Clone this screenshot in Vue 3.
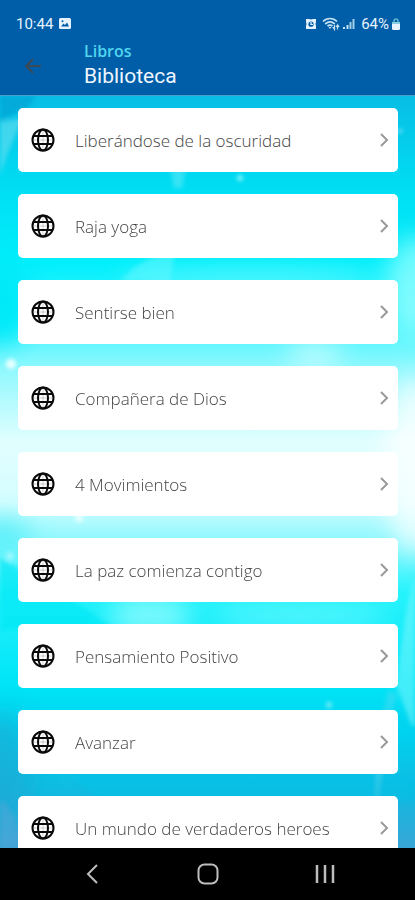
<script setup>
const books = [
  'Liberándose de la oscuridad',
  'Raja yoga',
  'Sentirse bien',
  'Compañera de Dios',
  '4 Movimientos',
  'La paz comienza contigo',
  'Pensamiento Positivo',
  'Avanzar',
  'Un mundo de verdaderos heroes',
]
</script>

<template>
  <div class="screen">
    <header class="top">
      <div class="status">
        <div class="status-group">
          <span>10:44</span>
          <svg width="12" height="12" viewBox="0 0 12 12" aria-hidden="true">
            <rect width="12" height="11" rx="1.500" fill="#e6f3ff" />
            <path d="M2 8.5 4.5 5.5 6 7 8 4.5 10 8.5Z" fill="#005da8" />
            <circle cx="3.5" cy="3.2" r="1" fill="#005da8" />
          </svg>
        </div>
        <div class="status-group right">
          <svg width="12" height="12" viewBox="0 0 12 12" aria-hidden="true">
            <path d="M1 1h3l2 .5L8 1h3v3l-.5 2 .5 2v3H1V8l.5-2L1 4Z" fill="#e6f3ff" />
            <circle cx="6" cy="6.2" r="2.6" fill="#005da8" />
            <path d="M6 4v2.500h2" fill="none" stroke="#e6f3ff" stroke-width="1.200" />
          </svg>
          <svg class="wifi" width="18" height="14" viewBox="0 0 18 14" fill="none" stroke="#c5e3f5" aria-hidden="true">
            <path d="M1 4.5C5 .5 11 .5 15 4.5M3.2 7c3-2.6 6.600-2.600 9.600 0M5.500 9.200c1.600-1.300 3.400-1.300 5 0" stroke-width="1.700" />
            <path d="M6.500 10h3L8 12Z" fill="#c5e3f5" stroke="none" />
            <path d="M10.800 10 12.500 12.500V8M14 10l1.500-2v4.500M15.500 8l1.700 2" stroke-width="1.200" />
          </svg>
          <svg width="12" height="12" viewBox="0 0 12 12" aria-hidden="true">
            <path d="M0 9h2v2H0ZM3.500 7h2v4h-2Z" fill="#c5e3f5" />
            <path d="M6.500 4h2v7h-2ZM9.500 1h2v10h-2Z" fill="#a3cde6" />
          </svg>
          <span class="battery">64%</span>
          <svg width="8" height="12" viewBox="0 0 8 12" aria-hidden="true">
            <path d="M2 5V3a2 2 0 0 1 4 0v2" fill="none" stroke="#5fb5cf" stroke-width="1.500" />
            <rect y="4" width="8" height="8" rx="1.500" fill="#e6f3ff" />
            <rect y="4" width="8" height="2" fill="#83cfe0" />
          </svg>
        </div>
      </div>
      <div class="bar">
        <button class="back" type="button" aria-label="Volver">
          <svg width="18" height="16" viewBox="0 0 18 16" fill="none" stroke="#3a4a58" stroke-width="2">
            <path d="M17 8H2M9 1 2 8l7 7" />
          </svg>
        </button>
        <div class="titles">
          <p class="section">Libros</p>
          <h1>Biblioteca</h1>
        </div>
      </div>
    </header>

    <main class="content">
      <svg class="backdrop" viewBox="0 0 415 752" preserveAspectRatio="none" aria-hidden="true">
        <defs>
          <linearGradient id="sky" x1="0" y1="0" x2="0" y2="1">
            <stop offset="0" stop-color="#08bde4" />
            <stop offset=".12" stop-color="#00ddf3" />
            <stop offset=".22" stop-color="#00effc" />
            <stop offset=".3" stop-color="#40f5fd" />
            <stop offset=".36" stop-color="#8cf8fe" />
            <stop offset=".46" stop-color="#e2feff" />
            <stop offset=".54" stop-color="#d4fdff" />
            <stop offset=".6" stop-color="#80f7fd" />
            <stop offset=".66" stop-color="#26f3fc" />
            <stop offset=".78" stop-color="#00e5f7" />
            <stop offset=".85" stop-color="#00d1ee" />
            <stop offset=".93" stop-color="#12b9e0" />
            <stop offset="1" stop-color="#39a5d5" />
          </linearGradient>
          <filter id="soft" x="-50%" y="-50%" width="200%" height="200%"><feGaussianBlur stdDeviation="12" /></filter>
          <filter id="mist" x="-50%" y="-50%" width="200%" height="200%"><feGaussianBlur stdDeviation="2" /></filter>
        </defs>
        <rect width="415" height="752" fill="url(#sky)" />
        <g filter="url(#soft)">
          <ellipse cx="0" cy="205" rx="34" ry="44" fill="#00e9f8" />
          <ellipse cx="250" cy="184" rx="130" ry="12" fill="#6ef8ff" opacity=".7" />
          <ellipse cx="415" cy="190" rx="28" ry="50" fill="#a5ffff" opacity=".7" />
          <ellipse cx="415" cy="370" rx="30" ry="90" fill="#fff" opacity=".7" />
          <ellipse cx="150" cy="520" rx="42" ry="20" fill="#b8ffff" opacity=".6" />
          <ellipse cx="300" cy="520" rx="90" ry="12" fill="#7efaff" opacity=".6" />
          <ellipse cx="0" cy="670" rx="32" ry="54" fill="#269fcd" opacity=".5" />
          <ellipse cx="315" cy="260" rx="28" ry="18" fill="#e4ffff" opacity=".5" />
          <ellipse cx="0" cy="440" rx="32" ry="18" fill="#47edf8" opacity=".7" />
        </g>
        <g filter="url(#mist)">
          <path d="M0 0H36L28 11 0 25Z" fill="#009fd2" opacity=".65" />
          <path d="M0 26 24 22Q8 52 0 80Z" fill="#7de3f2" opacity=".5" />
          <path d="M170 72h16l-4 20h-8Z" fill="#6cecf7" opacity=".5" />
          <path d="M120 185Q145 158 175 156L170 189Z" fill="#68f7ff" opacity=".5" />
          <path d="M0 462Q70 500 115 534H0Z" fill="#00e6f5" opacity=".65" />
          <path d="M415 480Q405 510 396 590L412 630 415 630Z" fill="#86f7fd" opacity=".5" />
          <path d="M72 679Q85 692 102 705H415V679Z" fill="#00c3e8" opacity=".4" />
          <path d="M388 594 398 598 392 615 376 714V650Z" fill="#62d9f0" opacity=".4" />
          <path d="M0 703Q22 720 18 752H0Z" fill="#55a6d7" opacity=".5" />
          <circle cx="11" cy="268" r="5" fill="#edffff" />
          <circle cx="240" cy="82" r="3" fill="#8bf5fd" />
          <circle cx="400" cy="35" r="2" fill="#98efff" />
          <circle cx="329" cy="609" r="3" fill="#7bedf7" />
          <circle cx="79" cy="422" r="4" fill="#eaffff" />
          <circle cx="10" cy="460" r="4" fill="#a0f8ff" />
        </g>
      </svg>
      <ul class="list">
        <li v-for="book in books" :key="book">
          <a class="card" href="#">
            <svg class="globe" width="24" height="24" viewBox="0 0 24 24" fill="none" stroke="#0a0a0a" stroke-width="2" aria-hidden="true">
              <circle cx="12" cy="12" r="10.500" />
              <ellipse cx="12" cy="12" rx="5" ry="10.500" />
              <path d="M2.500 8h19M2.500 16h19" />
              <path d="M12 1.500v21M1.500 12h21" stroke-width="1" opacity=".2" />
            </svg>
            <span class="name">{{ book }}</span>
            <svg width="10" height="14" viewBox="0 0 10 14" fill="none" stroke="#999" stroke-width="2" aria-hidden="true">
              <path d="m2 1 6 6-6 6" />
            </svg>
          </a>
        </li>
      </ul>
    </main>

    <nav class="system">
      <button type="button" aria-label="Atrás">
        <svg width="20" height="20" viewBox="0 0 20 20" fill="none" stroke="#bdbdbd" stroke-width="2">
          <path d="M16 1 7 10l9 9" />
        </svg>
      </button>
      <button type="button" aria-label="Inicio">
        <svg width="22" height="22" viewBox="0 0 22 22" fill="none" stroke="#bdbdbd" stroke-width="2">
          <rect x="1.500" y="1.500" width="19" height="19" rx="6" />
        </svg>
      </button>
      <button type="button" aria-label="Recientes">
        <svg width="20" height="20" viewBox="0 0 20 20" fill="none" stroke="#bdbdbd" stroke-width="2.500">
          <path d="M2 1v18M10 1v18M18 1v18" />
        </svg>
      </button>
    </nav>
  </div>
</template>

<style>
body {
  margin: 0;
}
</style>

<style scoped>
.screen {
  display: flex;
  flex-direction: column;
  height: 100vh;
  font-family: "Open Sans", "Noto Sans", sans-serif;
}

.top {
  flex: none;
  padding-top: 12px;
  background: #005da8;
  border-bottom: 1px solid #4a9fc4;
}

.status {
  display: flex;
  justify-content: space-between;
  height: 24px;
  padding: 0 15px 0 16px;
  color: #e6f3ff;
  font-family: Roboto, sans-serif;
  font-size: 15px;
}

.status-group {
  display: flex;
  align-items: center;
  gap: 6px;
}

.right {
  gap: 3px;
}

.wifi {
  margin-left: 2px;
}

.battery {
  margin-left: 3px;
}

.bar {
  display: flex;
  align-items: center;
  height: 59px;
  padding-left: 24px;
}

.back {
  display: flex;
  width: 60px;
  padding: 0;
  border: 0;
  background: none;
}

.section,
h1 {
  margin: 0;
}

.section {
  color: #4fd6ef;
  font-size: 16px;
  font-weight: 600;
  line-height: 22px;
}

h1 {
  padding-bottom: 2px;
  color: #eef6ff;
  font-family: Roboto, sans-serif;
  font-size: 21px;
  font-weight: 400;
  line-height: 28px;
}

.content {
  position: relative;
  flex: 1;
  min-height: 0;
  overflow: hidden;
}

.backdrop {
  position: absolute;
  inset: 0;
  width: 100%;
  height: 100%;
}

.list {
  position: relative;
  display: flex;
  flex-direction: column;
  gap: 22px;
  height: 100%;
  box-sizing: border-box;
  margin: 0;
  padding: 12px 17px 12px 18px;
  overflow-y: auto;
  scrollbar-width: none;
  list-style: none;
}

.card {
  display: flex;
  align-items: center;
  height: 64px;
  padding: 0 9px 0 13px;
  border-radius: 5px;
  background: #fff;
  color: #444;
  text-decoration: none;
}

.globe {
  flex: none;
}

.name {
  flex: 1;
  padding: 2px 12px 0 20px;
  font-size: 17px;
  font-weight: 300;
  line-height: 24px;
}

.system {
  display: flex;
  flex: none;
  justify-content: space-around;
  align-items: center;
  height: 52px;
  padding: 0 32px;
  background: #000;
}

.system button {
  display: flex;
  justify-content: center;
  width: 48px;
  padding: 0;
  border: 0;
  background: none;
}
</style>
